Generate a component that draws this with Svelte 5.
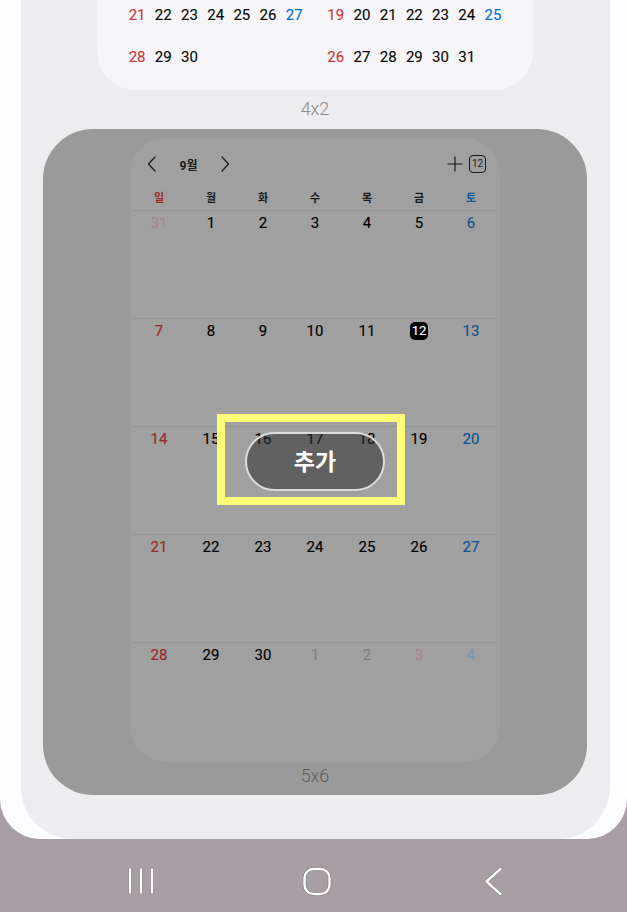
<script>
  const topLeft = [[21,22,23,24,25,26,27],[28,29,30,'','','','']];
  const topRight = [[19,20,21,22,23,24,25],[26,27,28,29,30,31,'']];
  const weekdays = ['일','월','화','수','목','금','토'];
  const weeks = [
    [31,1,2,3,4,5,6],
    [7,8,9,10,11,12,13],
    [14,15,16,17,18,19,20],
    [21,22,23,24,25,26,27],
    [28,29,30,1,2,3,4]
  ];
  function isOther(w, i) { return (w === 0 && i === 0) || (w === 4 && i >= 3); }
</script>

<div class="screen">
  <div class="sheet">
    <div class="panel">
      <div class="small-card">
        {#each [topLeft, topRight] as month}
          <div class="small-month">
            {#each month as row}
              {#each row as d, i}
                <span class:sun={i === 0} class:sat={i === 6}>{d}</span>
              {/each}
            {/each}
          </div>
        {/each}
      </div>
      <div class="size">4x2</div>

      <div class="dim-card">
        <div class="widget">
          <div class="head">
            <svg class="chev" width="12" height="18" viewBox="0 0 12 18"><path d="M9 2 2.5 9 9 16"/></svg>
            <span class="month">9월</span>
            <svg class="chev" width="12" height="18" viewBox="0 0 12 18"><path d="M3 2 9.5 9 3 16"/></svg>
            <span class="spacer"></span>
            <svg class="chev plus" width="16" height="16" viewBox="0 0 16 16"><path d="M8 1v14M1 8h14"/></svg>
            <span class="badge">12</span>
          </div>
          <div class="weekdays">
            {#each weekdays as w, i}
              <span class:sun={i === 0} class:sat={i === 6}>{w}</span>
            {/each}
          </div>
          <div class="weeks">
            {#each weeks as week, wi}
              <div class="week">
                {#each week as d, i}
                  <div class="day" class:sun={i === 0} class:sat={i === 6} class:other={isOther(wi, i)}>
                    <span class:today={wi === 1 && i === 5}>{d}</span>
                  </div>
                {/each}
              </div>
            {/each}
          </div>
        </div>
        <div class="size dark">5x6</div>

        <div class="highlight">
          <div class="add">추가</div>
        </div>
      </div>
    </div>
  </div>

  <nav class="nav">
    <svg width="40" height="30" viewBox="0 0 40 30">
      <g class="halo"><path d="M9 3.5v23M20 3.5v23M31 3.5v23"/></g>
      <g class="ico"><path d="M9 3.5v23M20 3.5v23M31 3.5v23"/></g>
    </svg>
    <svg width="40" height="30" viewBox="0 0 40 30">
      <rect class="halo" x="7.5" y="3" width="25" height="25" rx="9"/>
      <rect class="ico" x="7.5" y="3" width="25" height="25" rx="9"/>
    </svg>
    <svg width="40" height="30" viewBox="0 0 40 30">
      <path class="halo" d="M27.5 3 13.5 15.5l14 12.5"/>
      <path class="ico" d="M27.5 3 13.5 15.5l14 12.5"/>
    </svg>
  </nav>
</div>

<style>
  :global(body) {
    margin: 0;
    background: #a99ea3;
  }
  .screen {
    width: 627px;
    height: 912px;
    overflow: hidden;
    display: flex;
    flex-direction: column;
    background: #a99ea3;
    font-family: Roboto, "Noto Sans CJK KR", sans-serif;
  }
  .sheet {
    height: 839px;
    flex: none;
    padding: 0 17px 0 21px;
    background: #fdfdff;
    border-radius: 0 0 40px 40px;
    display: flex;
    flex-direction: column;
    overflow: hidden;
  }
  .panel {
    flex: 1;
    min-height: 0;
    background: #edecee;
    border-radius: 0 0 52px 52px;
    display: flex;
    flex-direction: column;
    align-items: center;
    justify-content: flex-end;
    padding: 0 1px 44px 0;
  }
  .small-card {
    flex: none;
    width: 436px;
    box-sizing: border-box;
    background: #f6f6f8;
    border-radius: 0 0 38px 38px;
    padding: 0 27px 12px;
    display: flex;
    justify-content: space-between;
  }
  .small-month {
    display: grid;
    grid-template-columns: repeat(7, 26.2px);
    grid-auto-rows: 42px;
    align-items: center;
    justify-items: center;
    font-size: 15px;
    font-weight: 400;
    -webkit-text-stroke: 0.15px;
    color: #0a0a0a;
  }
  .small-month .sun { color: #cb3a3a; }
  .small-month .sat { color: #0a6fd2; }
  .size {
    flex: none;
    height: 39px;
    line-height: 37px;
    font-size: 18px;
    font-weight: 300;
    color: #8a8a8c;
    text-align: center;
  }
  .dim-card {
    position: relative;
    flex: none;
    width: 544px;
    height: 666px;
    box-sizing: border-box;
    padding-top: 9px;
    background: #9a9a9b;
    border-radius: 50px;
    display: flex;
    flex-direction: column;
    align-items: center;
  }
  .widget {
    flex: none;
    width: 370px;
    height: 624px;
    box-sizing: border-box;
    padding: 0 3px;
    background: #a0a0a1;
    border-radius: 36px;
  }
  .size.dark {
    height: 33px;
    line-height: 27px;
    color: #5d5d5e;
  }
  .head {
    height: 52px;
    display: flex;
    align-items: center;
    padding: 0 11px 0 13px;
    color: #1a1a1a;
  }
  .chev {
    fill: none;
    stroke: #1a1a1a;
    stroke-width: 1.2;
    stroke-linecap: round;
    stroke-linejoin: round;
  }
  .month {
    width: 61px;
    text-align: center;
    font-size: 12px;
    font-weight: 700;
  }
  .spacer { flex: 1; }
  .plus { margin-right: 6px; }
  .badge {
    width: 17px;
    height: 18px;
    box-sizing: border-box;
    border: 1.2px solid #1a1a1a;
    border-radius: 4px;
    font-size: 10px;
    line-height: 16px;
    text-align: center;
    font-weight: 400;
  }
  .weekdays {
    display: grid;
    grid-template-columns: repeat(7, 52px);
    height: 20px;
    line-height: 17px;
    text-align: center;
    font-size: 11px;
    font-weight: 700;
    color: #1a1a1a;
  }
  .weekdays .sun { color: #9c2c2c; }
  .weekdays .sat { color: #12589c; }
  .week {
    display: grid;
    grid-template-columns: repeat(7, 52px);
    height: 108px;
    box-sizing: border-box;
    border-top: 1px solid #949495;
  }
  .day {
    text-align: center;
    font-size: 15px;
    font-weight: 400;
    -webkit-text-stroke: 0.15px;
    line-height: 25px;
    color: #000;
  }
  .day.sun { color: #962a2a; }
  .day.sat { color: #0b5394; }
  .day.other { color: #7f7f80; }
  .day.sun.other { color: #ad898b; }
  .day.sat.other { color: #7b96b2; }
  .week:last-child .day:nth-child(6) { color: #ad898b; }
  .today {
    display: inline-block;
    width: 18px;
    height: 18px;
    margin-top: 3px;
    border-radius: 5px;
    background: #000;
    color: #fff;
    font-size: 13px;
    font-weight: 400;
    line-height: 18px;
    vertical-align: top;
  }
  .highlight {
    position: absolute;
    left: 174px;
    top: 285px;
    width: 188px;
    height: 91px;
    box-sizing: border-box;
    border: 8px solid #fdfd78;
    padding: 10px 0 0 20px;
  }
  .add {
    width: 140px;
    height: 59px;
    box-sizing: border-box;
    border: 2px solid #dcdcdc;
    border-radius: 30px;
    background: rgba(45, 45, 45, 0.55);
    color: #fff;
    font-size: 23px;
    font-weight: 700;
    line-height: 57px;
    text-align: center;
  }
  .nav {
    flex: 1;
    display: flex;
    justify-content: center;
    align-items: center;
    gap: 136px;
    padding-left: 7px;
    padding-top: 11px;
  }
  .nav .ico, .nav .ico path {
    fill: none;
    stroke: #fff;
    stroke-width: 2.4;
    stroke-linecap: round;
    stroke-linejoin: round;
  }
  .nav .halo, .nav .halo path {
    fill: none;
    stroke: #7e747a;
    stroke-width: 3.4;
    stroke-linecap: round;
    stroke-linejoin: round;
  }
</style>
